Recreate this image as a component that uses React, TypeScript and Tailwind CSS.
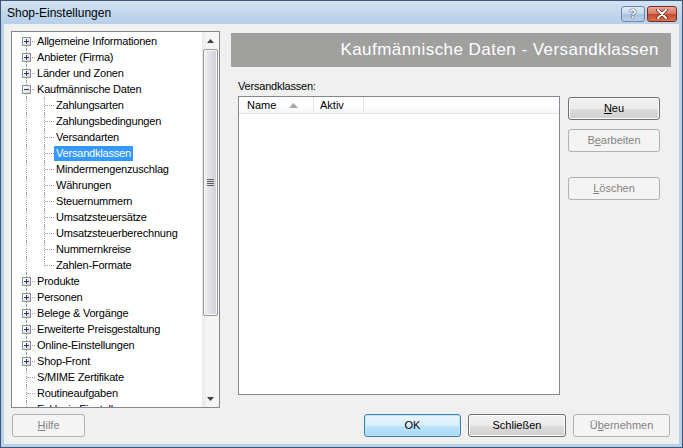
import React from "react";

type Item = { label: string; kind: "plus" | "minus" | "leaf" | "child"; last?: boolean; selected?: boolean };

const items: Item[] = [
  { label: "Allgemeine Informationen", kind: "plus" },
  { label: "Anbieter (Firma)", kind: "plus" },
  { label: "Länder und Zonen", kind: "plus" },
  { label: "Kaufmännische Daten", kind: "minus" },
  { label: "Zahlungsarten", kind: "child" },
  { label: "Zahlungsbedingungen", kind: "child" },
  { label: "Versandarten", kind: "child" },
  { label: "Versandklassen", kind: "child", selected: true },
  { label: "Mindermengenzuschlag", kind: "child" },
  { label: "Währungen", kind: "child" },
  { label: "Steuernummern", kind: "child" },
  { label: "Umsatzsteuersätze", kind: "child" },
  { label: "Umsatzsteuerberechnung", kind: "child" },
  { label: "Nummernkreise", kind: "child" },
  { label: "Zahlen-Formate", kind: "child", last: true },
  { label: "Produkte", kind: "plus" },
  { label: "Personen", kind: "plus" },
  { label: "Belege & Vorgänge", kind: "plus" },
  { label: "Erweiterte Preisgestaltung", kind: "plus" },
  { label: "Online-Einstellungen", kind: "plus" },
  { label: "Shop-Front", kind: "plus" },
  { label: "S/MIME Zertifikate", kind: "leaf" },
  { label: "Routineaufgaben", kind: "leaf" },
  { label: "Exklusiv-Einstellungen", kind: "leaf" },
];

function Expander({ minus }: { minus?: boolean }) {
  return (
    <div className="absolute left-[10px] top-[4px] w-[9px] h-[9px] border border-[#919191] bg-gradient-to-br from-white to-[#d6d6d6] flex items-center justify-center">
      <div className="relative w-[5px] h-[5px]">
        <div className="absolute left-0 top-[2px] w-[5px] h-[1px] bg-[#1f3f7a]" />
        {!minus && <div className="absolute left-[2px] top-0 w-[1px] h-[5px] bg-[#1f3f7a]" />}
      </div>
    </div>
  );
}

function TreeRow({ item, index }: { item: Item; index: number }) {
  const isChild = item.kind === "child";
  return (
    <div className="flex h-[16px] items-center">
      <div className="relative w-[23px] h-[16px] shrink-0">
        <div
          className={
            index === 0
              ? "absolute left-[14px] top-[8px] bottom-0 border-l border-dotted border-[#a0a0a0]"
              : "absolute left-[14px] top-0 bottom-0 border-l border-dotted border-[#a0a0a0]"
          }
        />
        {!isChild && <div className="absolute left-[15px] top-[8px] w-[8px] border-t border-dotted border-[#a0a0a0]" />}
        {item.kind === "plus" && <Expander />}
        {item.kind === "minus" && <Expander minus />}
      </div>
      {isChild && (
        <div className="relative w-[19px] h-[16px] shrink-0">
          <div
            className={
              item.last
                ? "absolute left-[9px] top-0 h-[9px] border-l border-dotted border-[#a0a0a0]"
                : "absolute left-[9px] top-0 bottom-0 border-l border-dotted border-[#a0a0a0]"
            }
          />
          <div className="absolute left-[10px] top-[8px] w-[9px] border-t border-dotted border-[#a0a0a0]" />
        </div>
      )}
      <span
        className={
          item.selected
            ? "px-[2px] h-[15px] leading-[15px] bg-[#3399ff] text-white whitespace-nowrap tracking-[-0.2px]"
            : "px-[2px] h-[15px] leading-[15px] text-black whitespace-nowrap tracking-[-0.2px]"
        }
      >
        {item.label}
      </span>
    </div>
  );
}

function Btn({
  children,
  disabled,
  focused,
  className,
}: {
  children: React.ReactNode;
  disabled?: boolean;
  focused?: boolean;
  className?: string;
}) {
  let cls =
    "h-[23px] rounded-[3px] border flex items-center justify-center text-[11px] leading-none ";
  if (disabled) cls += "border-[#adb2b5] bg-[#f4f4f4] text-[#838383] ";
  else if (focused)
    cls +=
      "border-[#3c7fb1] bg-[linear-gradient(to_bottom,#eaf6fd_0%,#d9f0fc_50%,#bee6fd_51%,#a7d9f5_100%)] text-black shadow-[inset_0_0_0_1px_#c4e5f6] ";
  else
    cls +=
      "border-[#707070] bg-[linear-gradient(to_bottom,#f2f2f2_0%,#ebebeb_50%,#dddddd_51%,#cfcfcf_100%)] text-black shadow-[inset_0_0_0_1px_#fcfcfc] ";
  return <div className={cls + (className ?? "")}>{children}</div>;
}

export default function App() {
  return (
    <div
      className="w-[683px] h-[448px] border border-[#3d5573] bg-[#b9d1ea] flex flex-col overflow-hidden"
      style={{ fontFamily: '"Liberation Sans", Arial, sans-serif' }}
    >
      {/* Title bar */}
      <div className="h-[23px] shrink-0 flex items-center justify-between pl-[6px] pr-[5px] bg-[linear-gradient(to_bottom,#d4e3f3_0%,#c2d7ed_50%,#b7cfe9_100%)]">
        <span className="text-[12px] text-black">Shop-Einstellungen</span>
        <div className="flex items-center gap-[2px] mt-[2px]">
          <div className="w-[24px] h-[16px] rounded-[3px] border border-[#6b87a8] bg-[linear-gradient(to_bottom,#e3edf8_0%,#c4d6ea_50%,#a9c2df_51%,#b9d1ea_100%)] flex items-center justify-center">
            <span
              className="text-[12px] font-bold text-white leading-none"
              style={{ textShadow: "0 0 1px #36475e, 0 0 1px #36475e, 0 0 1px #36475e" }}
            >
              ?
            </span>
          </div>
          <div className="w-[30px] h-[16px] rounded-[3px] border border-[#7e2a1c] bg-[linear-gradient(to_bottom,#e9a99b_0%,#d77560_50%,#c44a2c_51%,#d6714f_100%)] flex items-center justify-center">
            <svg width="12" height="10" viewBox="0 0 12 10">
              <path d="M2 1 L10 9 M10 1 L2 9" stroke="#5a1a10" strokeWidth="3.4" strokeLinecap="round" />
              <path d="M2 1 L10 9 M10 1 L2 9" stroke="#ffffff" strokeWidth="2" strokeLinecap="round" />
            </svg>
          </div>
        </div>
      </div>

      {/* Body */}
      <div className="flex-1 mx-[3px] mb-[3px] bg-[#f0f0f0] flex flex-col pt-[7px] pl-[7px] pr-[8px] text-[11px] text-black">
        <div className="flex h-[377px] gap-[11px]">
          {/* Tree */}
          <div className="w-[209px] h-[377px] border border-[#828790] bg-white flex">
            <div className="flex-1 overflow-hidden pt-[1px]">
              {items.map((it, i) => (
                <TreeRow key={i} item={it} index={i} />
              ))}
            </div>
            {/* Scrollbar */}
            <div className="w-[17px] flex flex-col bg-[linear-gradient(to_right,#e8e8e8,#f5f5f5_30%,#f5f5f5)]">
              <div className="h-[17px] flex items-center justify-center">
                <svg width="7" height="4" viewBox="0 0 7 4">
                  <path d="M3.5 0 L7 4 L0 4 Z" fill="#404040" />
                </svg>
              </div>
              <div className="mx-[1px] h-[267px] rounded-[2px] border border-[#979797] bg-[linear-gradient(to_right,#f3f3f3_0%,#e2e2e8_40%,#cfcfd8_100%)] shadow-[inset_0_0_0_1px_#f8f8f8] flex items-center justify-center">
                <div className="flex flex-col gap-[1px]">
                  <div className="w-[7px] h-[1px] bg-[#5c5c5c]" />
                  <div className="w-[7px] h-[1px] bg-[#5c5c5c]" />
                  <div className="w-[7px] h-[1px] bg-[#5c5c5c]" />
                  <div className="w-[7px] h-[1px] bg-[#5c5c5c]" />
                </div>
              </div>
              <div className="flex-1" />
              <div className="h-[17px] flex items-center justify-center">
                <svg width="7" height="4" viewBox="0 0 7 4">
                  <path d="M0 0 L7 0 L3.5 4 Z" fill="#404040" />
                </svg>
              </div>
            </div>
          </div>

          {/* Right column */}
          <div className="w-[440px] flex flex-col">
            <div className="mt-[2px] h-[34px] bg-[#a0a09f] flex items-center justify-end pr-[12px]">
              <span className="text-[17px] text-white tracking-[0.45px]">Kaufmännische Daten - Versandklassen</span>
            </div>
            <div className="pl-[7px]">
              <div className="pt-[12px] h-[26px] leading-[14px] mb-[3px] tracking-[-0.2px]">Versandklassen:</div>
              <div className="flex gap-[8px]">
                <div className="w-[322px] h-[299px] border border-[#828790] bg-white flex flex-col">
                  <div className="h-[17px] flex border-b border-[#e5e5e5] bg-[linear-gradient(to_bottom,#ffffff_0%,#ffffff_60%,#f3f6fa_100%)]">
                    <div className="w-[75px] border-r border-[#e5e5e5] flex items-center pl-[8px]">
                      <span>Name</span>
                      <svg className="ml-[13px]" width="9" height="5" viewBox="0 0 9 5">
                        <path d="M4.5 0 L9 5 L0 5 Z" fill="#a7a7a7" />
                      </svg>
                    </div>
                    <div className="w-[50px] border-r border-[#e5e5e5] flex items-center pl-[6px]">Aktiv</div>
                  </div>
                </div>
                <div className="w-[92px] flex flex-col pt-[1px]">
                  <Btn>
                    <span>
                      <u>N</u>eu
                    </span>
                  </Btn>
                  <Btn disabled className="mt-[9px]">
                    <span>
                      B<u>e</u>arbeiten
                    </span>
                  </Btn>
                  <Btn disabled className="mt-[25px]">
                    <span>
                      <u>L</u>öschen
                    </span>
                  </Btn>
                </div>
              </div>
            </div>
          </div>
        </div>

        {/* Bottom row */}
        <div className="mt-[6px] flex justify-between">
          <Btn disabled className="w-[73px] ml-[1px]">
            <span>
              <u>H</u>ilfe
            </span>
          </Btn>
          <div className="flex gap-[7px] mr-[1px]">
            <Btn focused className="w-[97px]">
              OK
            </Btn>
            <Btn className="w-[98px]">Schließen</Btn>
            <Btn disabled className="w-[97px]">
              <span>
                Ü<u>b</u>ernehmen
              </span>
            </Btn>
          </div>
        </div>
      </div>
    </div>
  );
}
